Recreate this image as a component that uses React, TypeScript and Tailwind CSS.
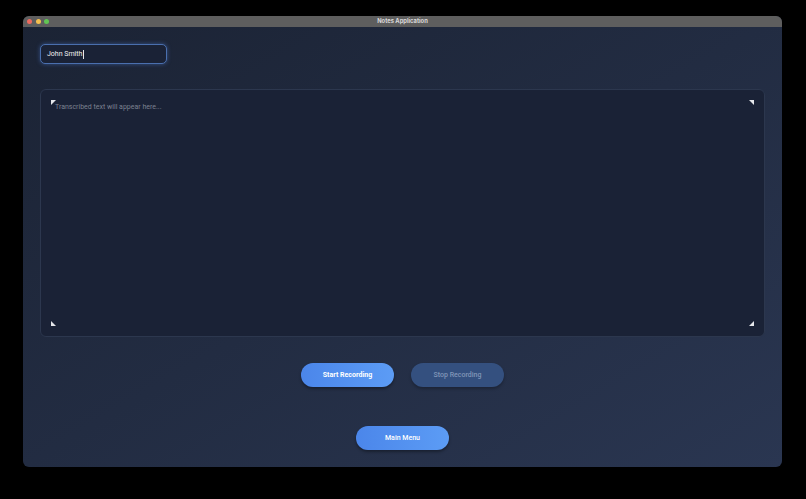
import React from "react";

function Corner({ rot }: { rot: string }) {
  return (
    <svg width="5" height="5" viewBox="0 0 5 5" className={rot}>
      <polygon points="0,0 5,0 0,5" fill="#e5e7eb" />
    </svg>
  );
}

export default function App() {
  return (
    <div className="w-[806px] h-[499px] bg-black relative" style={{ fontFamily: "Roboto, Inter, 'Liberation Sans', sans-serif" }}>
      <div className="absolute left-[23px] top-[16px] w-[759px] h-[451px] rounded-[6px] overflow-hidden flex flex-col bg-gradient-to-br from-[#1b2334] via-[#222c42] to-[#2a3651]">
        <div className="h-[11px] bg-[#5e5e5e] flex items-center relative shrink-0">
          <div className="flex gap-[3.5px] pl-[4px]">
            <span className="w-[5px] h-[5px] rounded-full bg-[#ec6a5e]" />
            <span className="w-[5px] h-[5px] rounded-full bg-[#f4bf4f]" />
            <span className="w-[5px] h-[5px] rounded-full bg-[#61c554]" />
          </div>
          <div className="absolute inset-0 flex items-center justify-center text-[5.8px] font-bold text-[#dadada]" style={{ fontFamily: "Inter, sans-serif" }}>Notes Application</div>
        </div>
        <div className="flex-1 flex flex-col px-[17px] pt-[17px] pb-[17px]">
          <div className="w-[127px] h-[20px] rounded-[5px] border border-[#4a6fae] bg-[#1a2236] shadow-[0_0_4px_rgba(80,130,220,0.5)] flex items-center pl-[6px] pt-[1px] text-[7px] text-[#f0f0f0]">
            John Smith<span className="w-[0.6px] h-[9px] bg-[#e5e7eb] ml-[0.5px]" />
          </div>
          <div className="mt-[25px] h-[248px] rounded-[6px] border border-[#2c374e] bg-[#1a2236] relative">
            <div className="absolute left-[14px] top-[12px] text-[7px] text-[#7a8190]">Transcribed text will appear here...</div>
            <div className="absolute left-[10px] top-[10px]"><Corner rot="" /></div>
            <div className="absolute right-[10px] top-[10px]"><Corner rot="rotate-90" /></div>
            <div className="absolute left-[10px] bottom-[10px]"><Corner rot="-rotate-90" /></div>
            <div className="absolute right-[10px] bottom-[10px]"><Corner rot="rotate-180" /></div>
          </div>
          <div className="mt-[26px] flex justify-center gap-[17px]">
            <button className="w-[93px] h-[24px] rounded-full bg-gradient-to-r from-[#4b86ea] to-[#5c9cf5] text-white text-[7px] font-bold shadow-[0_2px_3px_rgba(0,0,0,0.35)]">Start Recording</button>
            <button className="w-[93px] h-[24px] rounded-full bg-[#34507f] text-[#8196b8] text-[7px] font-medium shadow-[0_2px_3px_rgba(0,0,0,0.25)]">Stop Recording</button>
          </div>
          <div className="mt-[39px] flex justify-center">
            <button className="w-[93px] h-[24px] rounded-full bg-gradient-to-r from-[#4b86ea] to-[#5c9cf5] text-white text-[7px] font-medium shadow-[0_2px_3px_rgba(0,0,0,0.35)]">Main Menu</button>
          </div>
        </div>
      </div>
    </div>
  );
}
